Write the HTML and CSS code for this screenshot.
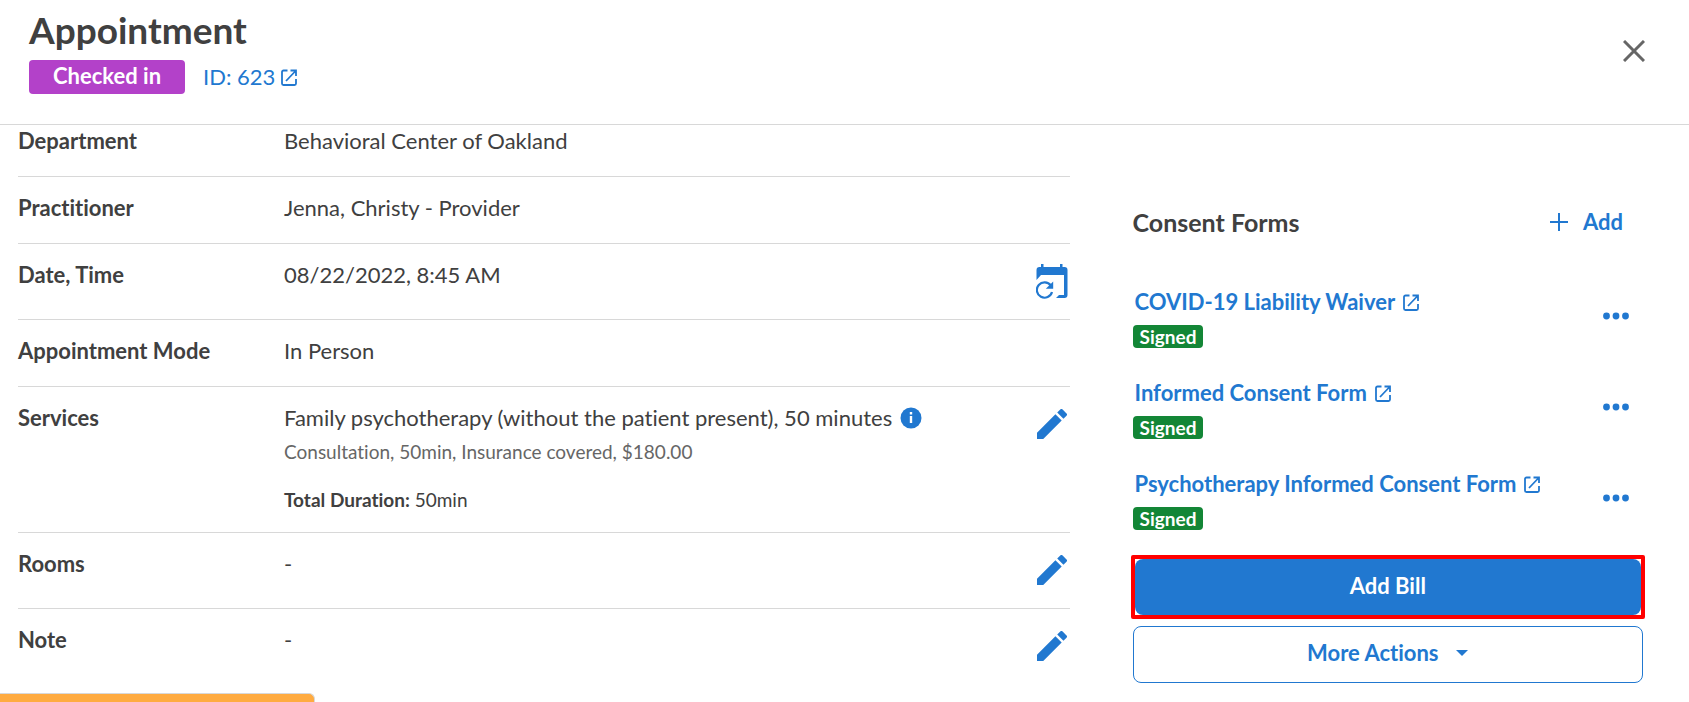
FILE: index.html
```html
<!DOCTYPE html>
<html lang="en">

<head>
	<meta charset="utf-8">
	<meta name="viewport" content="width=device-width, initial-scale=1">
	<title>Appointment</title>
	<link rel="stylesheet" href="styles.css">
</head>

<body>
	<!-- shared icons -->
	<svg class="sprite" aria-hidden="true">
		<symbol id="icon-open" viewBox="0 0 16 17">
			<path d="M6.5 1.5H2.5a1.5 1.5 0 0 0-1.5 1.5v11.500a1.500 1.500 0 0 0 1.500 1.500h11a1.500 1.500 0 0 0 1.500-1.500V10M9.500 1.500H15V7M15 1.500L5 12" fill="none" stroke="currentColor" stroke-width="1.800" />
		</symbol>
		<symbol id="icon-pencil" viewBox="3 3 18 18">
			<path d="M3 17.250V21h3.750L17.810 9.940l-3.750-3.750L3 17.250zM20.710 7.040a1 1 0 0 0 0-1.410l-2.340-2.340a1 1 0 0 0-1.410 0l-1.830 1.830 3.750 3.750 1.830-1.830z" fill="currentColor" />
		</symbol>
		<symbol id="icon-dots" viewBox="0 0 26 8">
			<circle cx="3.500" cy="4" r="3.400" />
			<circle cx="13" cy="4" r="3.400" />
			<circle cx="22.500" cy="4" r="3.400" />
		</symbol>
	</svg>

	<header class="header">
		<div>
			<h1>Appointment</h1>
			<div class="header-info">
				<span class="status">Checked in</span>
				<a class="id-link" href="#">ID: 623 <svg class="icon-open"><use href="#icon-open" /></svg></a>
			</div>
		</div>
		<button type="button" class="btn-close" aria-label="Close">
			<svg width="22" height="22" viewBox="0 0 22 22"><path d="M1 1L21 21M21 1L1 21" stroke="#666" stroke-width="3" /></svg>
		</button>
	</header>

	<main class="content">
		<dl class="details">
			<div class="row">
				<dt>Department</dt>
				<dd>Behavioral Center of Oakland</dd>
			</div>
			<div class="row">
				<dt>Practitioner</dt>
				<dd>Jenna, Christy - Provider</dd>
			</div>
			<div class="row">
				<dt>Date, Time</dt>
				<dd>08/22/2022, 8:45 AM</dd>
				<dd class="action">
					<button type="button" class="btn-icon" aria-label="Reschedule">
						<svg width="32" height="36" viewBox="0 0 32 36">
							<path d="M5 1h2.500v3H24V1h2.500v3h2a3 3 0 0 1 3 3v25a3 3 0 0 1-3 3H20l3-3h5V12H5l-4.500 5V7a3 3 0 0 1 3-3H5z" fill="currentColor" />
							<path d="M14.800 22.500A7.700 7.700 0 1 0 16 29" fill="none" stroke="currentColor" stroke-width="2.200" />
							<path d="M17.200 18.500V25.800H9.800z" fill="currentColor" />
						</svg>
					</button>
				</dd>
			</div>
			<div class="row">
				<dt>Appointment Mode</dt>
				<dd>In Person</dd>
			</div>
			<div class="row">
				<dt>Services</dt>
				<dd>
					<div class="service">
						Family psychotherapy (without the patient present), 50 minutes
						<svg class="icon-info" width="22" height="22" viewBox="0 0 22 22">
							<circle cx="11" cy="11" r="10.500" fill="#2178d0" />
							<path d="M9.800 5h2.400v2.400H9.800zM9.800 9h2.400v7H9.800z" fill="#fff" />
						</svg>
					</div>
					<div class="service-note">Consultation, 50min, Insurance covered, $180.00</div>
					<div class="duration"><b>Total Duration:</b> 50min</div>
				</dd>
				<dd class="action">
					<button type="button" class="btn-icon" aria-label="Edit services"><svg class="icon-pencil"><use href="#icon-pencil" /></svg></button>
				</dd>
			</div>
			<div class="row">
				<dt>Rooms</dt>
				<dd>-</dd>
				<dd class="action">
					<button type="button" class="btn-icon" aria-label="Edit rooms"><svg class="icon-pencil"><use href="#icon-pencil" /></svg></button>
				</dd>
			</div>
			<div class="row">
				<dt>Note</dt>
				<dd>-</dd>
				<dd class="action">
					<button type="button" class="btn-icon" aria-label="Edit note"><svg class="icon-pencil"><use href="#icon-pencil" /></svg></button>
				</dd>
			</div>
		</dl>

		<aside class="side">
			<div class="side-head">
				<h2>Consent Forms</h2>
				<button type="button" class="btn-add">
					<svg width="18" height="18" viewBox="0 0 18 18"><path d="M9 0V18M0 9H18" stroke="currentColor" stroke-width="2" /></svg>
					Add
				</button>
			</div>
			<ul class="forms">
				<li>
					<div>
						<a href="#">COVID-19 Liability Waiver <svg class="icon-open"><use href="#icon-open" /></svg></a>
						<span class="signed">Signed</span>
					</div>
					<button type="button" class="btn-dots" aria-label="Form options"><svg class="icon-dots"><use href="#icon-dots" /></svg></button>
				</li>
				<li>
					<div>
						<a href="#">Informed Consent Form <svg class="icon-open"><use href="#icon-open" /></svg></a>
						<span class="signed">Signed</span>
					</div>
					<button type="button" class="btn-dots" aria-label="Form options"><svg class="icon-dots"><use href="#icon-dots" /></svg></button>
				</li>
				<li>
					<div>
						<a href="#">Psychotherapy Informed Consent Form <svg class="icon-open"><use href="#icon-open" /></svg></a>
						<span class="signed">Signed</span>
					</div>
					<button type="button" class="btn-dots" aria-label="Form options"><svg class="icon-dots"><use href="#icon-dots" /></svg></button>
				</li>
			</ul>
			<div class="highlight">
				<button type="button" class="btn btn-bill">Add Bill</button>
			</div>
			<button type="button" class="btn btn-more">
				More Actions
				<svg width="12" height="6" viewBox="0 0 12 6"><path d="M0 0h12L6 6z" fill="currentColor" /></svg>
			</button>
		</aside>
	</main>

	<!-- top edge of the notification at the bottom of the window -->
	<div class="toast"></div>
</body>

</html>
```
FILE: styles.css
```css
* {
	box-sizing: border-box;
}

body {
	margin: 0;
	font-family: Lato, sans-serif;
	font-size: 22px;
	font-variant-ligatures: none;
	line-height: 30px;
	color: #404040;
	background-color: #fff;
}

h1,
h2,
dl,
dd,
ul {
	margin: 0;
	padding: 0;
}

a {
	color: #2178d0;
	text-decoration: none;
}

button {
	border: 0;
	padding: 0;
	background: none;
	font: inherit;
	color: #2178d0;
	cursor: pointer;
}

svg {
	display: block;
}

.sprite {
	position: absolute;
	width: 0;
	height: 0;
}

/* header */
.header {
	display: flex;
	justify-content: space-between;
	align-items: flex-start;
	padding: 8px 44px 30px 29px;
	border-bottom: 1px solid #d8d8d8;
}

h1 {
	font-size: 37px;
	font-weight: 700;
	line-height: 44px;
}

.header-info {
	display: flex;
	gap: 18px;
	margin-top: 8px;
}

.status {
	padding: 1px 24px 3px;
	border-radius: 4px;
	background-color: #b341c9;
	color: #fff;
	font-weight: 700;
}

.id-link {
	display: flex;
	align-items: center;
	gap: 6px;
}

.btn-close {
	margin-top: 32px;
}

.icon-open {
	width: 16px;
	height: 17px;
}

/* columns */
.content {
	display: grid;
	grid-template-columns: 2.06fr 1fr;
	gap: 63px;
	padding: 0 46px 0 18px;
}

.row {
	display: flex;
	padding: 16px 0 20px;
	border-bottom: 1px solid #d8d8d8;
}

.row:first-child {
	padding-top: 1px;
}

.row:last-child {
	border-bottom: 0;
	padding-bottom: 0;
}

dt {
	flex: none;
	width: 266px;
	font-weight: 700;
}

.action {
	margin-left: auto;
}

.btn-icon {
	display: flex;
	align-items: center;
	justify-content: center;
	width: 36px;
	height: 39px;
	padding-top: 2px;
}

.icon-pencil {
	width: 30px;
	height: 30px;
}

.service {
	display: flex;
	align-items: center;
	gap: 8px;
}

.service-note {
	margin-top: 5px;
	font-size: 19px;
	line-height: 28px;
	color: #666;
}

.duration {
	margin-top: 22px;
	font-size: 19px;
	line-height: 24px;
}

/* consent forms */
.side {
	padding-top: 82px;
}

.side-head {
	display: flex;
	justify-content: space-between;
	align-items: center;
	padding-right: 20px;
}

h2 {
	font-size: 25px;
	font-weight: 700;
}

.btn-add {
	display: flex;
	align-items: center;
	gap: 15px;
	font-weight: 700;
}

.forms {
	margin-top: 50px;
	list-style: none;
}

.forms li {
	display: flex;
	justify-content: space-between;
	align-items: center;
	padding-right: 14px;
	margin-bottom: 30px;
}

.forms a {
	display: flex;
	align-items: center;
	gap: 8px;
	padding-left: 2px;
	font-weight: 700;
}

.signed {
	display: block;
	width: fit-content;
	margin-top: 8px;
	padding: 0 7px;
	border-radius: 4px;
	background-color: #138636;
	color: #fff;
	font-size: 19px;
	font-weight: 700;
	line-height: 23px;
}

.btn-dots {
	padding-bottom: 4px;
}

.icon-dots {
	width: 26px;
	height: 8px;
	fill: currentColor;
}

.forms li:last-child {
	margin-bottom: 25px;
}

.highlight {
	margin: 0 -2px;
	border: 4px solid #f00;
	border-radius: 2px;
}

.btn {
	display: flex;
	align-items: center;
	justify-content: center;
	gap: 18px;
	width: 100%;
	height: 57px;
	padding-bottom: 3px;
	border-radius: 8px;
	font-weight: 700;
}

.btn-bill {
	height: 56px;
	background-color: #2178d0;
	color: #fff;
}

.btn-more {
	margin-top: 7px;
	border: 1px solid #2178d0;
}

.toast {
	position: fixed;
	left: 0;
	bottom: 0;
	width: 315px;
	height: 9px;
	border: 1px solid #d8d8d8;
	border-width: 1px 1px 0 0;
	border-radius: 0 6px 0 0;
	background-color: #ffab40;
}
```
